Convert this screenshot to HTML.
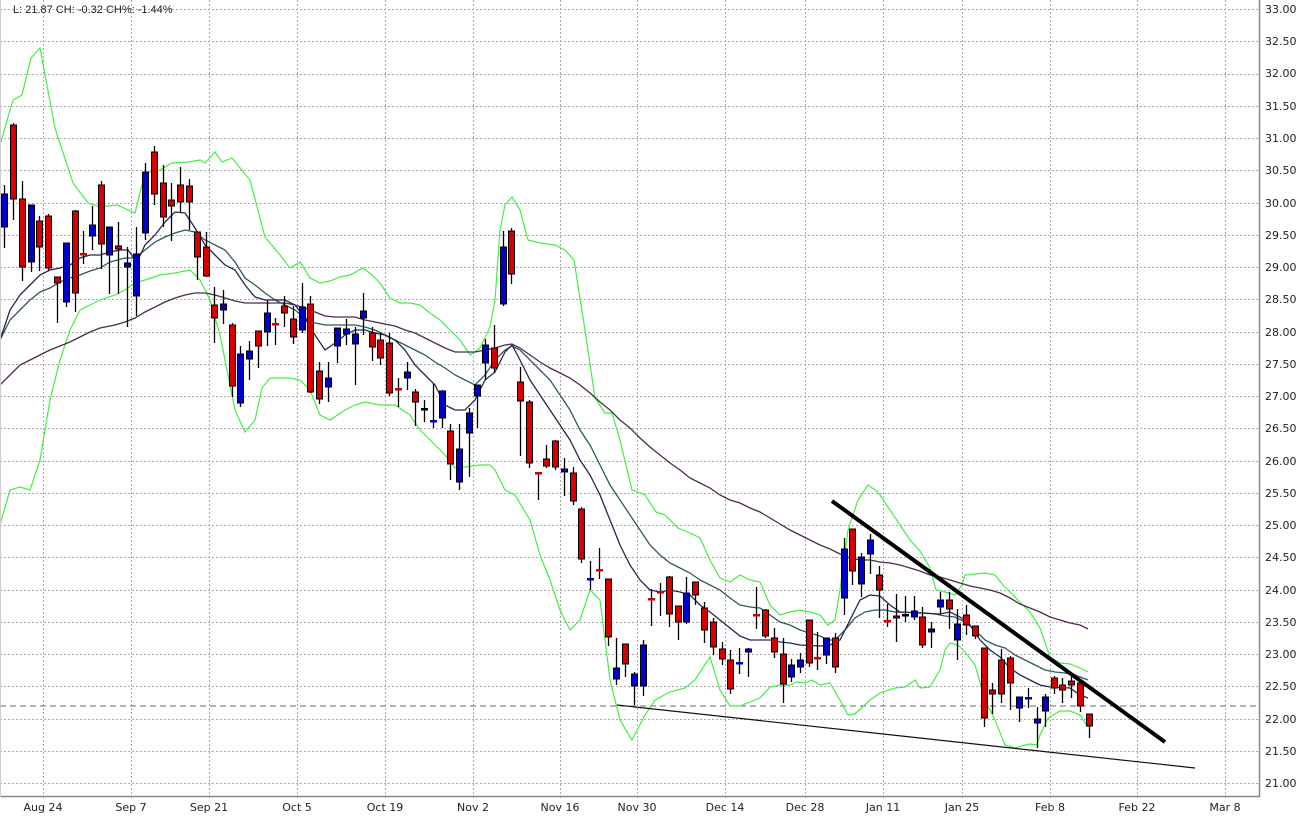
<!DOCTYPE html>
<html><head><meta charset="utf-8"><style>
html,body{margin:0;padding:0;background:#fff;}
svg{display:block;}
text{font-family:"DejaVu Sans","Liberation Sans",sans-serif;font-size:11px;fill:#222;}
</style></head><body>
<svg id="c" width="1305" height="821" xmlns="http://www.w3.org/2000/svg">
<g id="grid"></g>
<line x1="0" y1="706" x2="1259" y2="706" stroke="#6a6a6a" stroke-width="1" stroke-dasharray="6,4"/>
<g id="lines"></g>
<g id="candles"></g>
<line x1="832" y1="501" x2="1165" y2="742" stroke="#000" stroke-width="4"/>
<line x1="617" y1="705" x2="1195" y2="768" stroke="#111" stroke-width="1.2"/>
<line x1="1259.5" y1="0" x2="1259.5" y2="797" stroke="#888" stroke-width="1.5"/>
<line x1="0" y1="796.5" x2="1260" y2="796.5" stroke="#888" stroke-width="1.5"/>
<line x1="0.5" y1="0" x2="0.5" y2="797" stroke="#ccc" stroke-width="1"/>
<text x="13" y="13" style="font-family:'Liberation Sans',sans-serif;font-size:11px">L: 21.87 CH: -0.32 CH%: -1.44%</text>
<g>
<text x="1265" y="13">33.00</text>
<text x="1265" y="45">32.50</text>
<text x="1265" y="77">32.00</text>
<text x="1265" y="110">31.50</text>
<text x="1265" y="142">31.00</text>
<text x="1265" y="174">30.50</text>
<text x="1265" y="207">30.00</text>
<text x="1265" y="239">29.50</text>
<text x="1265" y="271">29.00</text>
<text x="1265" y="303">28.50</text>
<text x="1265" y="336">28.00</text>
<text x="1265" y="368">27.50</text>
<text x="1265" y="400">27.00</text>
<text x="1265" y="432">26.50</text>
<text x="1265" y="465">26.00</text>
<text x="1265" y="497">25.50</text>
<text x="1265" y="529">25.00</text>
<text x="1265" y="561">24.50</text>
<text x="1265" y="594">24.00</text>
<text x="1265" y="626">23.50</text>
<text x="1265" y="658">23.00</text>
<text x="1265" y="690">22.50</text>
<text x="1265" y="723">22.00</text>
<text x="1265" y="755">21.50</text>
<text x="1265" y="787">21.00</text>
</g>
<g text-anchor="middle">
<text x="43" y="811">Aug 24</text>
<text x="131" y="811">Sep 7</text>
<text x="209" y="811">Sep 21</text>
<text x="297" y="811">Oct 5</text>
<text x="385" y="811">Oct 19</text>
<text x="473" y="811">Nov 2</text>
<text x="560" y="811">Nov 16</text>
<text x="637" y="811">Nov 30</text>
<text x="725" y="811">Dec 14</text>
<text x="805" y="811">Dec 28</text>
<text x="883" y="811">Jan 11</text>
<text x="962" y="811">Jan 25</text>
<text x="1050" y="811">Feb 8</text>
<text x="1137" y="811">Feb 22</text>
<text x="1225" y="811">Mar 8</text>
</g>
</svg>
<script>
var NS="http://www.w3.org/2000/svg";
function el(p,t,a){var e=document.createElementNS(NS,t);for(var k in a)e.setAttribute(k,a[k]);p.appendChild(e);return e;}
var g=document.getElementById('grid');
for(var k=0;k<=24;k++){var y=Math.round(9+32.25*k)+0.5;el(g,'line',{x1:0,y1:y,x2:1259,y2:y,stroke:'#aaa','stroke-width':1,'stroke-dasharray':'2,2'});}
[43,131,209,297,385,473,560,637,725,805,883,962,1050,1137,1225].forEach(function(x){el(g,'line',{x1:x+0.5,y1:0,x2:x+0.5,y2:800,stroke:'#aaa','stroke-width':1,'stroke-dasharray':'2,2'});});
function pl(pts,col,w){var s=[];for(var i=0;i<pts.length;i+=2)s.push(pts[i]+','+pts[i+1]);el(document.getElementById('lines'),'polyline',{points:s.join(' '),fill:'none',stroke:col,'stroke-width':w||1.2});}
pl([0,145,13,100,22,95,31,58,40,48,55,128,73,183,88,203,100,207,117,205,135,213,145,173,160,170,172,163,188,162,200,160,205,163,215,152,222,162,232,158,250,180,265,237,280,255,290,268,300,262,310,278,320,283,330,281,340,277,350,275,363,268,372,275,380,283,390,298,400,303,410,303,420,305,430,313,440,320,450,330,460,340,470,355,480,348,490,327,495,300,500,230,505,205,512,197,520,210,528,240,540,243,555,245,565,250,574,260,585,330,595,398,605,413,612,413,620,440,632,490,645,495,656,512,665,515,678,528,690,533,700,538,710,560,720,578,730,582,740,575,750,580,760,582,770,605,780,615,790,612,800,610,810,612,820,615,828,625,835,620,840,590,848,530,858,500,868,485,878,492,890,510,900,525,910,540,920,551,930,568,936,590,945,592,955,595,962,585,965,575,985,573,995,575,1003,585,1010,592,1020,602,1030,612,1040,628,1050,657,1060,663,1070,664,1080,668,1088,672],'#44ee44',1.2);
pl([0,525,10,490,20,487,30,490,40,460,50,400,60,360,70,330,80,310,90,305,100,300,115,295,125,290,135,283,145,280,160,275,175,273,190,270,200,280,210,300,220,335,235,410,245,432,255,420,262,388,270,378,280,378,290,378,300,380,310,390,320,415,330,420,345,410,355,405,365,402,380,405,395,405,410,415,420,430,430,440,445,455,455,468,465,467,480,465,490,465,495,470,505,490,515,495,530,520,540,555,550,580,560,610,570,630,580,620,590,590,600,600,610,680,620,720,632,740,645,715,655,700,670,692,685,688,695,680,710,657,720,690,730,706,740,706,750,702,760,698,770,687,780,685,790,685,797,682,805,683,812,680,820,685,830,683,840,700,848,715,855,714,870,700,880,693,895,688,905,687,915,680,920,688,930,687,940,670,945,650,950,643,958,645,965,652,975,665,985,700,995,720,1005,745,1015,748,1025,745,1030,744,1037,745,1040,735,1048,718,1060,711,1070,711,1080,715,1088,727],'#44ee44',1.2);
pl([0,385,10,375,20,365,30,360,40,355,50,350,60,346,70,342,80,337,90,332,100,328,115,325,125,322,135,318,145,312,155,307,165,302,175,298,185,295,195,293,205,293,215,295,225,298,235,301,245,303,275,303,285,303,295,305,305,308,315,312,325,316,335,317,355,317,365,320,375,322,385,324,395,326,405,330,415,333,425,338,435,343,445,348,455,352,475,352,485,350,495,348,505,345,512,344,520,348,530,355,540,362,550,368,560,373,570,378,580,385,590,393,600,402,610,410,620,420,630,428,640,438,650,447,660,455,670,463,680,470,690,478,700,483,710,488,720,495,730,500,740,503,750,508,760,512,770,518,780,524,790,530,800,535,810,540,820,545,830,549,840,554,850,558,860,560,870,560,880,562,890,563,900,565,910,568,920,571,930,575,940,577,950,580,960,583,970,586,980,588,990,590,1000,593,1010,598,1020,604,1030,608,1040,612,1050,617,1060,620,1070,623,1080,625,1088,629],'#4e2a50',1.3);
pl([0,340,10,320,20,310,30,300,40,292,50,288,60,282,70,278,80,275,90,271,100,268,110,262,125,258,135,258,145,250,155,242,165,237,175,233,185,230,195,232,205,240,215,245,225,250,235,262,245,278,255,285,265,293,275,300,285,305,295,310,305,318,315,323,325,325,355,325,365,327,375,330,385,335,395,340,405,345,415,350,425,355,435,362,445,368,455,375,465,380,475,385,485,375,495,360,505,350,512,346,520,350,530,360,540,370,550,380,560,395,570,410,580,430,590,445,600,465,610,485,620,500,630,515,640,530,650,545,660,555,670,563,680,568,690,573,700,580,710,585,720,590,730,598,740,605,750,607,760,608,770,615,780,622,790,625,800,630,810,633,820,636,828,640,835,640,845,630,855,618,865,612,875,610,885,610,895,612,925,613,935,614,945,616,955,617,965,622,975,630,985,640,995,645,1005,648,1015,655,1025,660,1035,665,1045,670,1055,672,1065,673,1075,675,1088,680],'#2f5a58',1.3);
pl([0,340,10,310,20,295,30,285,40,275,50,270,60,268,70,265,80,258,90,255,100,255,110,252,120,250,128,250,137,262,145,245,155,235,165,222,175,212,185,213,195,228,205,245,215,255,225,265,235,270,245,285,255,297,265,300,285,300,295,305,305,318,315,335,325,350,335,343,345,335,355,330,365,330,375,333,385,335,395,340,405,350,415,365,425,375,435,385,445,405,455,410,465,410,475,400,485,380,495,372,505,352,512,345,520,360,530,380,540,395,550,410,560,425,570,440,580,460,590,475,600,495,610,520,620,545,630,565,640,580,650,590,660,592,670,590,680,592,690,595,700,605,710,612,720,620,730,628,740,636,750,640,770,640,780,642,790,643,800,645,820,646,830,645,840,640,850,620,860,600,870,595,880,596,890,605,900,612,940,614,950,612,960,617,970,625,980,640,990,650,1000,657,1010,668,1020,675,1030,680,1040,685,1050,687,1070,688,1080,695,1088,698],'#262650',1.3);
// x, bodyTop, bodyBot, wickTop, wickBot, color(r/b), dash?
var C=[
[4,194,227,185,248,'b'],[13,125,199,123,220,'r'],[22,199,267,181,281,'r'],[31,205,262,205,272,'b'],[39,221,247,216,271,'r'],[48,216,268,214,271,'r'],[57,277,283,277,323,'r'],[66,243,302,243,307,'b'],[75,211,293,210,312,'r'],[83,254,254,231,264,'r'],[92,225,236,206,250,'b'],[101,185,244,181,269,'r'],[109,227,255,227,294,'b'],[118,246,249,222,294,'r'],[127,263,267,247,327,'b'],[136,254,296,227,316,'b'],[145,172,233,163,240,'b'],[154,152,194,146,205,'r'],[163,183,217,165,227,'r'],[171,200,206,183,241,'r'],[180,185,202,167,212,'r'],[189,186,202,179,230,'r'],[197,232,257,232,280,'r'],[206,247,276,232,277,'r'],[214,305,318,287,343,'r'],[223,304,310,290,324,'b'],[232,325,386,323,397,'r'],[240,354,403,346,407,'b'],[249,351,359,341,380,'b'],[258,331,346,331,368,'r'],[267,313,332,300,346,'b'],[275,324,324,318,345,'r'],[284,306,313,296,327,'r'],[293,319,337,306,344,'r'],[302,307,330,283,333,'b'],[310,304,392,296,393,'r'],[319,371,399,362,404,'r'],[328,378,387,362,402,'b'],[337,328,346,328,363,'b'],[346,329,334,319,345,'b'],[355,334,344,327,385,'b'],[363,311,318,293,335,'b'],[372,333,347,327,361,'r'],[380,340,358,333,365,'r'],[389,343,393,333,396,'r'],[398,389,389,378,407,'r'],[407,372,378,362,390,'b'],[415,392,402,389,426,'r'],[424,409,409,400,422,'k'],[433,421,421,384,428,'b'],[442,391,418,390,428,'b'],[450,431,464,424,480,'r'],[459,449,482,424,490,'b'],[469,413,433,408,477,'b'],[477,385,396,385,428,'b'],[485,345,363,339,380,'b'],[494,348,368,325,373,'r'],[503,247,304,231,306,'b'],[511,231,274,228,284,'r'],[520,382,401,367,456,'r'],[529,402,463,400,468,'r'],[538,473,473,473,500,'r'],[546,459,466,445,468,'r'],[555,441,467,440,470,'r'],[564,469,472,458,496,'b'],
[573,473,501,467,505,'r'],[581,509,559,507,563,'r'],[590,579,579,561,590,'b'],[599,570,570,548,579,'r'],[608,579,637,579,646,'r'],[616,668,679,638,685,'b'],[625,644,664,644,677,'r'],[634,674,686,672,705,'b'],[643,645,686,640,696,'b'],[651,599,599,589,626,'r'],[660,592,592,583,616,'r'],[669,577,614,576,627,'r'],[678,606,622,606,640,'r'],[686,593,622,577,624,'b'],[695,582,595,582,605,'r'],[704,608,630,602,643,'r'],[713,622,647,618,655,'r'],[722,649,659,642,665,'r'],[730,660,689,650,694,'r'],[739,663,663,648,674,'b'],[748,649,652,648,677,'b'],[756,615,615,587,629,'r'],[765,610,636,609,638,'r'],[774,638,652,628,658,'r'],[783,654,684,638,703,'r'],[791,665,677,659,682,'b'],[800,660,667,653,673,'b'],[809,620,663,620,667,'r'],[817,658,659,632,670,'r'],[826,638,655,638,664,'b'],[835,638,667,633,673,'r'],
[844,549,598,538,615,'b'],[852,529,571,529,585,'r'],[861,557,584,553,597,'b'],[870,540,554,534,574,'b'],[879,575,590,566,618,'r'],[887,621,621,604,627,'r'],[896,616,618,594,642,'r'],[905,615,615,596,622,'k'],[914,611,617,596,620,'b'],[922,617,645,607,648,'r'],[931,629,632,622,648,'b'],[940,600,607,592,614,'b'],[949,600,609,592,629,'r'],[957,624,640,609,660,'b'],[966,615,625,605,635,'r'],[975,626,636,626,639,'r'],[984,648,718,648,727,'r'],[992,690,694,683,714,'r'],[1001,660,694,649,703,'r'],[1010,658,683,656,710,'r'],[1019,697,708,697,722,'b'],[1028,698,698,688,708,'b'],[1037,719,723,707,748,'b'],[1045,697,711,694,727,'b'],[1054,678,688,676,694,'r'],[1062,685,690,678,703,'r'],[1071,681,685,676,698,'r'],[1080,683,706,682,712,'r'],[1089,714,726,714,738,'r']];
var cg=document.getElementById('candles');
var col={r:'#d40000',b:'#0000c8',k:'#000'};
C.forEach(function(c){var x=c[0]+0.5;
el(cg,'line',{x1:x,y1:c[3],x2:x,y2:c[4],stroke:'#000','stroke-width':1.3});
if(c[2]-c[1]<2){el(cg,'rect',{x:c[0]-3,y:c[1]-1,width:7,height:2.5,fill:col[c[5]]});}
else el(cg,'rect',{x:c[0]-2.5,y:c[1],width:6,height:c[2]-c[1],fill:col[c[5]],stroke:'#000','stroke-width':1});
});
</script>
</body></html>
